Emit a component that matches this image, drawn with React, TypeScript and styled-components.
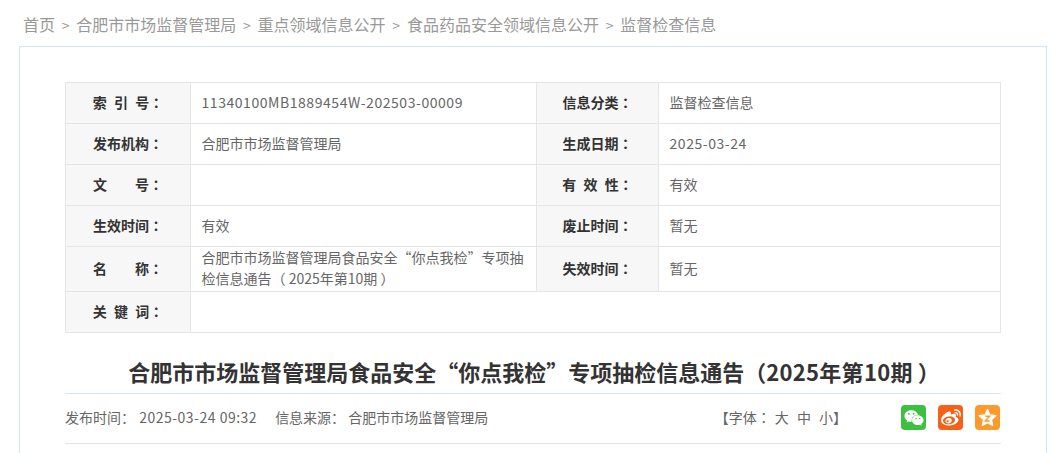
import styled, { createGlobalStyle } from 'styled-components';
import { FaWeibo, FaWeixin } from 'react-icons/fa';

const FONT = `"Noto Sans CJK SC", "Noto Sans", sans-serif`;

type Row = {
  label: string;
  value: string;
  sideLabel?: string;
  sideValue?: string;
  tall?: boolean;
};

const rows: Row[] = [
  {
    label: '索 引 号',
    value: '11340100MB1889454W-202503-00009',
    sideLabel: '信息分类',
    sideValue: '监督检查信息',
  },
  {
    label: '发布机构',
    value: '合肥市市场监督管理局',
    sideLabel: '生成日期',
    sideValue: '2025-03-24',
  },
  { label: '文　　号', value: '', sideLabel: '有 效 性', sideValue: '有效' },
  { label: '生效时间', value: '有效', sideLabel: '废止时间', sideValue: '暂无' },
  {
    label: '名　　称',
    value: '合肥市市场监督管理局食品安全“你点我检”专项抽检信息通告（ 2025年第10期 ）',
    sideLabel: '失效时间',
    sideValue: '暂无',
    tall: true,
  },
  { label: '关 键 词', value: '' },
];

const crumbs = ['首页', '合肥市市场监督管理局', '重点领域信息公开', '食品药品安全领域信息公开', '监督检查信息'];

const isLatin = (text: string) => /^[\w-]+$/.test(text);

const App = () => {
  return (
    <>
      <GlobalStyle />
      <Page>
        <Breadcrumb>
          {crumbs.map((crumb, i) => (
            <span key={crumb}>
              {i > 0 && <CrumbSep>&gt;</CrumbSep>}
              {crumb}
            </span>
          ))}
        </Breadcrumb>
        <Card>
          <InfoTable>
            <colgroup>
              <col width={125} />
              <col width={346} />
              <col width={122} />
              <col />
            </colgroup>
            <tbody>
              {rows.map((row) => (
                <InfoRow key={row.label} $tall={row.tall}>
                  <LabelCell>
                    {row.label}
                    <Colon>：</Colon>
                  </LabelCell>
                  {row.sideLabel ? (
                    <>
                      <ValueCell $latin={isLatin(row.value)}>{row.value}</ValueCell>
                      <LabelCell>
                        {row.sideLabel}
                        <Colon>：</Colon>
                      </LabelCell>
                      <ValueCell $latin={isLatin(row.sideValue ?? '')}>{row.sideValue}</ValueCell>
                    </>
                  ) : (
                    <ValueCell colSpan={3}>{row.value}</ValueCell>
                  )}
                </InfoRow>
              ))}
            </tbody>
          </InfoTable>
          <Title>
            合肥市市场监督管理局食品安全“你点我检”专项抽检信息通告（<TitleIssue>2025年第10期</TitleIssue> ）
          </Title>
          <MetaBar>
            <MetaLeft>
              <span>
                发布时间： <MetaDate>2025-03-24 09:32</MetaDate>
              </span>
              <span>信息来源： 合肥市市场监督管理局</span>
            </MetaLeft>
            <FontSizer>
              【字体<Colon>：</Colon> 大&nbsp; 中&nbsp; 小】
            </FontSizer>
            <ShareGroup>
              <ShareIcon $color="#3bc03f">
                <FaWeixin size={20} />
              </ShareIcon>
              <ShareIcon $color="#f85f17">
                <FaWeibo size={20} />
              </ShareIcon>
              <ShareIcon $color="#fd9a2c">
                <svg width="21" height="21" viewBox="0 0 24 24">
                  <path
                    fill="#fff"
                    stroke="#fff"
                    strokeWidth="1.5"
                    strokeLinejoin="round"
                    d="M12 3l2.800 6.100 6.700.8-5 4.600 1.400 6.700L12 17.800l-5.900 3.400 1.400-6.700-5-4.600 6.700-.8z"
                  />
                  <path
                    fill="none"
                    stroke="#fd9a2c"
                    strokeWidth="1.600"
                    d="M9.500 10.500h5l-5 5.500h5"
                  />
                </svg>
              </ShareIcon>
            </ShareGroup>
          </MetaBar>
        </Card>
      </Page>
    </>
  );
};

export default App;

const GlobalStyle = createGlobalStyle`
  html, body {
    margin: 0;
    height: 100%;
    overflow: hidden;
    background: #fff;
  }
  body {
    font-family: ${FONT};
    font-size: 14px;
    color: #666;
  }
`;

const Page = styled.div`
  padding: 0 17px 0 19px;
`;

const Breadcrumb = styled.div`
  height: 46px;
  padding: 0 0 0 4px;
  line-height: 49px;
  font-size: 16px;
  color: #999;
  white-space: nowrap;
`;

const CrumbSep = styled.span`
  margin: 0 6.75px;
  font-size: 14px;
`;

const Card = styled.div`
  height: 600px;
  padding: 35px 45px 0;
  border: 1px solid #d2e5f8;
  box-sizing: border-box;
`;

const InfoTable = styled.table`
  width: 936px;
  table-layout: fixed;
  border-collapse: collapse;
`;

const InfoRow = styled.tr<{ $tall?: boolean }>`
  height: ${({ $tall }) => ($tall ? '45px' : '41px')};
`;

const LabelCell = styled.td`
  padding: 0 0 2px;
  border: 1px solid #e5e5e5;
  background: #f7f7f7;
  font-weight: 700;
  color: #333;
  text-align: center;
  white-space: pre;
  word-spacing: 4px;
`;

const Colon = styled.span`
  font-family: "Noto Sans CJK TC", sans-serif;
`;

const ValueCell = styled.td<{ $latin?: boolean }>`
  padding: 0 8px 2px 10.5px;
  border: 1px solid #e5e5e5;
  line-height: 21px;
  letter-spacing: ${({ $latin }) => ($latin ? '0.55px' : '0')};
  color: #666;
`;

const Title = styled.h1`
  margin: 0;
  height: 60px;
  padding-left: 2px;
  line-height: 77px;
  font-size: 22px;
  font-weight: 700;
  color: #333;
  text-align: center;
  white-space: nowrap;
`;

const TitleIssue = styled.span`
  letter-spacing: 0.3px;
`;

const MetaBar = styled.div`
  display: flex;
  align-items: center;
  width: 936px;
  height: 47px;
  padding-bottom: 2px;
  border-top: 1px solid #d9e6f5;
  border-bottom: 1px solid #e2e5e8;
  color: #666;
`;

const MetaLeft = styled.div`
  display: flex;
  gap: 18px;
  padding-bottom: 2px;
  white-space: nowrap;
`;

const MetaDate = styled.span`
  margin-left: 1px;
  letter-spacing: 0.5px;
`;

const FontSizer = styled.div`
  margin-left: auto;
  padding-bottom: 2px;
  word-spacing: 0.9px;
  white-space: nowrap;
`;

const ShareGroup = styled.div`
  display: flex;
  gap: 12px;
  margin: 0 1px 0 54px;
`;

const ShareIcon = styled.span<{ $color: string }>`
  display: flex;
  align-items: center;
  justify-content: center;
  width: 25px;
  height: 25px;
  border-radius: 4px;
  background: ${({ $color }) => $color};
  color: #fff;
`;
